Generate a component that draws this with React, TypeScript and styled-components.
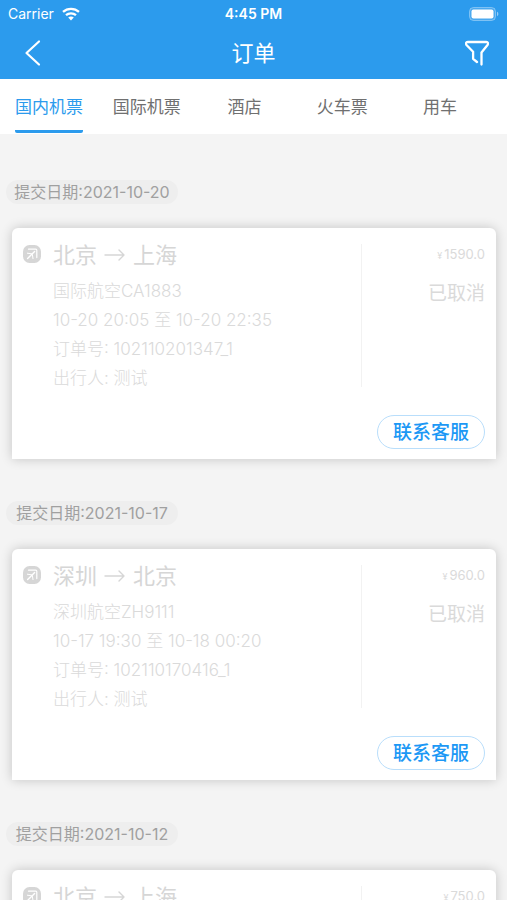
import React from "react";
import styled, { createGlobalStyle } from "styled-components";

const GlobalStyle = createGlobalStyle`
  * { box-sizing: border-box; }
  body {
    margin: 0;
    background: #f4f4f4;
    font-family: Inter, "Noto Sans CJK SC", sans-serif;
    overflow-x: hidden;
  }
  button { font-family: inherit; margin: 0; padding: 0; border: 0; background: none; cursor: pointer; }
  h1, h2, p { margin: 0; font-weight: 400; }
`;

const Screen = styled.div`
  height: 100vh;
  display: flex;
  flex-direction: column;
  overflow: hidden;
`;

const Header = styled.header`
  flex: none;
  background: #2c9bed;
  color: #fff;
`;

const StatusBar = styled.div`
  display: grid;
  grid-template-columns: 1fr auto 1fr;
  align-items: center;
  height: 27px;
  padding: 0 8px;
  font-size: 14px;
  line-height: 20px;
`;

const Carrier = styled.div`
  display: flex;
  align-items: center;
  gap: 8px;
`;

const Clock = styled.div`
  font-size: 14px;
  font-weight: 600;
`;

const BatterySlot = styled.div`
  display: flex;
  justify-content: flex-end;
`;

const NavBar = styled.div`
  display: grid;
  grid-template-columns: 1fr auto 1fr;
  align-items: center;
  height: 52px;
  padding: 0 18px;
`;

const NavTitle = styled.h1`
  font-size: 22px;
  line-height: 30px;
`;

const IconButton = styled.button<{ $end?: boolean }>`
  display: flex;
  padding-left: 5px;
  color: #fff;
  justify-self: ${(p) => (p.$end ? "end" : "start")};
`;

const Tabs = styled.nav`
  flex: none;
  display: flex;
  height: 55px;
  padding-right: 18px;
  background: #fff;
`;

const Tab = styled.button<{ $active: boolean }>`
  flex: 1;
  display: flex;
  justify-content: center;
  font-size: 17px;
  line-height: 24px;
  color: ${(p) => (p.$active ? "#2c9bed" : "#707070")};
`;

const TabLabel = styled.span<{ $active: boolean }>`
  height: 54px;
  padding-top: 16px;
  white-space: nowrap;
  border-bottom: 3px solid ${(p) => (p.$active ? "#2c9bed" : "transparent")};
  border-radius: 2px;
`;

const OrderList = styled.main`
  flex: 1;
  min-height: 0;
  overflow: hidden;
  padding: 46px 11px 0 12px;
`;

const OrderGroup = styled.section`
  margin-bottom: 42px;
`;

const DateChip = styled.h2`
  width: fit-content;
  min-width: 172px;
  margin: 0 0 24px -6px;
  padding: 0 6px;
  border-radius: 12px;
  background: #eeeeee;
  color: #a0a0a0;
  font-size: 16px;
  line-height: 24px;
  text-align: center;
`;

const Card = styled.article`
  min-height: 231px;
  padding: 16px 11px 10px 10px;
  display: flex;
  flex-direction: column;
  justify-content: space-between;
  border-radius: 6px 6px 0 0;
  background: #fff;
  box-shadow: 0 0 12px rgba(0, 0, 0, 0.2);
  color: #dadada;
`;

const CardBody = styled.div`
  display: flex;
`;

const PlaneSlot = styled.div`
  flex: none;
  width: 31px;
`;

const Trip = styled.div`
  flex: 1;
  height: 143px;
  border-right: 1px solid #f2f2f2;
`;

const Route = styled.p`
  display: flex;
  align-items: center;
  gap: 7px;
  margin-bottom: 11px;
  font-size: 22px;
  line-height: 22px;
  color: #d6d6d6;
`;

const Detail = styled.p`
  font-size: 17px;
  font-weight: 300;
  line-height: 29px;
  white-space: nowrap;
`;

const Summary = styled.div`
  width: 123px;
  text-align: right;
`;

const Price = styled.p`
  display: flex;
  justify-content: flex-end;
  align-items: baseline;
  gap: 2px;
  font-size: 13px;
  line-height: 20px;
`;

const Currency = styled.span`
  font-size: 9px;
`;

const Status = styled.p`
  margin-top: 14px;
  font-size: 19px;
  line-height: 28px;
`;

const SupportButton = styled.button`
  align-self: flex-end;
  width: 108px;
  height: 34px;
  && {
    padding-top: 2px;
    border: 1px solid #b9defb;
  }
  border-radius: 17px;
  color: #1c98f5;
  font-size: 19px;
  font-weight: 500;
  line-height: 28px;
`;

const WifiIcon = () => (
  <svg width="18" height="14" viewBox="0 0 18 14" fill="none" stroke="#fff" strokeWidth="2.3" aria-hidden="true">
    <path d="M1 4.9C5.5.8 12.5.8 17 4.9" />
    <path d="M4 8.2c2.8-2.5 7.2-2.5 10 0" />
    <path d="M6.2 10.6c1.6-1.4 4-1.4 5.6 0L9 13.4z" fill="#fff" stroke="none" />
  </svg>
);

const BatteryIcon = () => (
  <svg width="30" height="14" viewBox="0 0 30 14" aria-hidden="true">
    <rect x="0.5" y="0.5" width="26" height="13" rx="4" fill="#fff" fillOpacity="0.15" stroke="#fff" strokeOpacity="0.35" />
    <rect x="2.5" y="2.5" width="22" height="9" rx="2" fill="#fff" />
    <path d="M28 4.8c1.8.6 1.8 3.8 0 4.4z" fill="#fff" fillOpacity="0.5" />
  </svg>
);

const BackIcon = () => (
  <svg width="18" height="28" viewBox="0 0 18 28" fill="none" stroke="currentColor" strokeWidth="2.2" strokeLinecap="round" strokeLinejoin="round" aria-hidden="true">
    <path d="M16 2.5 3.5 14l12.5 11.5" />
  </svg>
);

const FilterIcon = () => (
  <svg width="24" height="26" viewBox="0 0 24 26" fill="none" stroke="currentColor" strokeWidth="2.3" strokeLinecap="round" strokeLinejoin="round" aria-hidden="true">
    <path d="M16.5 24.5V12.5L22.5 5c1-1.5.6-3-1.2-3H2.7C.9 2 .5 3.5 1.5 5l6.6 6.8v7L12 22" />
  </svg>
);

const PlaneIcon = () => (
  <svg width="20" height="20" viewBox="0 0 20 20" aria-hidden="true">
    <rect x="1" y="1" width="18" height="18" rx="6.5" fill="#d6d6d6" />
    <g fill="none" stroke="#fff" strokeLinecap="round" strokeLinejoin="round">
      <path d="M6.5 5.2h7.3c.7 0 1 .3 1 1v7.4" strokeWidth="1.2" />
      <path d="M12.6 7.4 5.6 14.4" strokeWidth="1.4" />
      <path d="M5.4 9.2 9.6 9.8M10.4 10.6l.6 4" strokeWidth="1" />
    </g>
  </svg>
);

const ArrowIcon = () => (
  <svg width="22" height="14" viewBox="0 0 22 14" fill="none" stroke="currentColor" strokeWidth="1.4" strokeLinecap="round" strokeLinejoin="round" aria-label="至">
    <path d="M1 7h19M15 2l5 5-5 5" />
  </svg>
);

const tabs = ["国内机票", "国际机票", "酒店", "火车票", "用车"];

interface Order {
  date: string;
  from: string;
  to: string;
  price: string;
  details: string[];
}

const orders: Order[] = [
  {
    date: "2021-10-20",
    from: "北京",
    to: "上海",
    price: "1590.0",
    details: ["国际航空CA1883", "10-20 20:05 至 10-20 22:35", "订单号: 102110201347_1", "出行人: 测试"],
  },
  {
    date: "2021-10-17",
    from: "深圳",
    to: "北京",
    price: "960.0",
    details: ["深圳航空ZH9111", "10-17 19:30 至 10-18 00:20", "订单号: 102110170416_1", "出行人: 测试"],
  },
  { date: "2021-10-12", from: "北京", to: "上海", price: "750.0", details: [] },
];

const OrderItem = ({ order }: { order: Order }) => (
  <OrderGroup>
    <DateChip>提交日期:{order.date}</DateChip>
    <Card>
      <CardBody>
        <PlaneSlot>
          <PlaneIcon />
        </PlaneSlot>
        <Trip>
          <Route>
            <span>{order.from}</span>
            <ArrowIcon />
            <span>{order.to}</span>
          </Route>
          {order.details.map((line) => (
            <Detail key={line}>{line}</Detail>
          ))}
        </Trip>
        <Summary>
          <Price>
            <Currency>¥</Currency>
            <span>{order.price}</span>
          </Price>
          <Status>已取消</Status>
        </Summary>
      </CardBody>
      <SupportButton type="button">联系客服</SupportButton>
    </Card>
  </OrderGroup>
);

export default function App() {
  const [active, setActive] = React.useState(0);
  return (
    <Screen>
      <GlobalStyle />
      <Header>
        <StatusBar>
          <Carrier>
            <span>Carrier</span>
            <WifiIcon />
          </Carrier>
          <Clock>4:45 PM</Clock>
          <BatterySlot>
            <BatteryIcon />
          </BatterySlot>
        </StatusBar>
        <NavBar>
          <IconButton type="button" aria-label="返回">
            <BackIcon />
          </IconButton>
          <NavTitle>订单</NavTitle>
          <IconButton type="button" aria-label="筛选" $end>
            <FilterIcon />
          </IconButton>
        </NavBar>
      </Header>
      <Tabs>
        {tabs.map((name, i) => (
          <Tab key={name} type="button" $active={i === active} onClick={() => setActive(i)}>
            <TabLabel $active={i === active}>{name}</TabLabel>
          </Tab>
        ))}
      </Tabs>
      <OrderList>
        {orders.map((order) => (
          <OrderItem key={order.date} order={order} />
        ))}
      </OrderList>
    </Screen>
  );
}
